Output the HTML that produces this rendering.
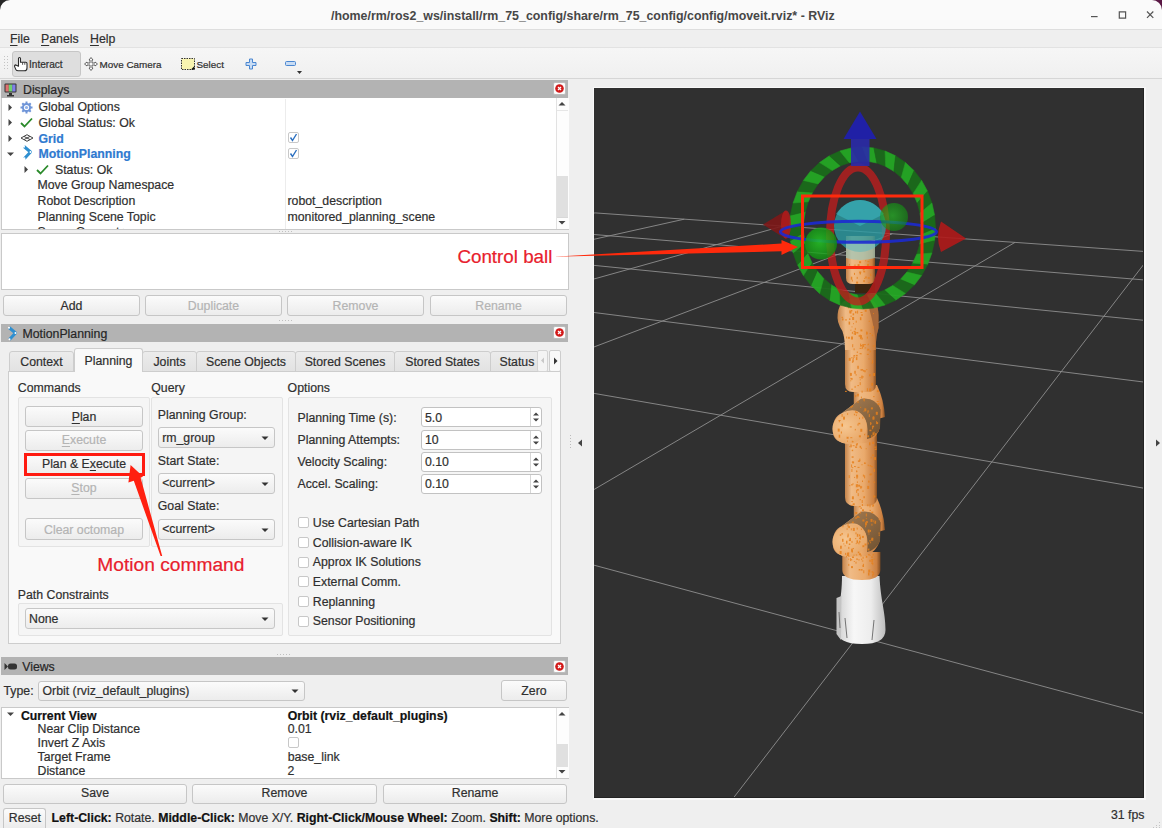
<!DOCTYPE html><html><head><meta charset="utf-8"><style>
html,body{margin:0;padding:0;}body{width:1162px;height:828px;position:relative;overflow:hidden;background:#efefef;font-family:'Liberation Sans',sans-serif;}
.t{position:absolute;white-space:pre;-webkit-text-stroke:0.2px currentColor;} .r{position:absolute;} svg.r{overflow:visible;}
</style></head><body>
<div class="r" style="left:0px;top:0px;width:1162px;height:29px;background:#fafafa;"></div>
<div class="r" style="left:0px;top:29px;width:1162px;height:1px;background:#dedede;"></div>
<svg class="r" style="left:0;top:0" width="12" height="12"><path d="M0 0H10A10 10 0 0 0 0 10Z" fill="#262626"/></svg>
<svg class="r" style="left:1150px;top:0" width="12" height="12"><path d="M12 0H2A10 10 0 0 1 12 10Z" fill="#5a1845"/></svg>
<div class="t" style="left:331.0px;top:7.90px;font-size:12.4px;line-height:16px;font-weight:700;color:#474747;-webkit-text-stroke:0;">/home/rm/ros2_ws/install/rm_75_config/share/rm_75_config/config/moveit.rviz* - RViz</div>
<svg class="r" style="left:1088px;top:8px" width="70" height="14"><path d="M3 8.6H9.6" stroke="#555" stroke-width="1.2"/><path d="M31.3 3.8h6.3v6.3h-6.3z" fill="none" stroke="#555" stroke-width="1.2"/><path d="M59 3.5L65.3 9.8M65.3 3.5L59 9.8" stroke="#555" stroke-width="1.2"/></svg>
<div class="r" style="left:0px;top:30px;width:1162px;height:17px;background:#efefef;"></div>
<div class="r" style="left:0px;top:47px;width:1162px;height:1px;background:#e2e2e2;"></div>
<div class="t" style="left:10.0px;top:31.04px;font-size:12.3px;line-height:16px;font-weight:400;color:#2f2f2f;"><u style="text-decoration-thickness:1px;text-underline-offset:1.5px">F</u>ile</div>
<div class="t" style="left:41.0px;top:31.04px;font-size:12.3px;line-height:16px;font-weight:400;color:#2f2f2f;"><u style="text-decoration-thickness:1px;text-underline-offset:1.5px">P</u>anels</div>
<div class="t" style="left:90.0px;top:31.04px;font-size:12.3px;line-height:16px;font-weight:400;color:#2f2f2f;"><u style="text-decoration-thickness:1px;text-underline-offset:1.5px">H</u>elp</div>
<div class="r" style="left:0px;top:48px;width:1162px;height:30px;background:linear-gradient(#f6f6f6,#f0f0f0);"></div>
<div class="r" style="left:0px;top:78px;width:1162px;height:1px;background:#d6d6d6;"></div>
<svg class="r" style="left:4px;top:56px" width="6" height="16"><g fill="#c4c4c4"><rect x="0" y="0" width="1" height="1"/><rect x="3" y="0" width="1" height="1"/><rect x="0" y="3" width="1" height="1"/><rect x="3" y="3" width="1" height="1"/><rect x="0" y="6" width="1" height="1"/><rect x="3" y="6" width="1" height="1"/><rect x="0" y="9" width="1" height="1"/><rect x="3" y="9" width="1" height="1"/><rect x="0" y="12" width="1" height="1"/><rect x="3" y="12" width="1" height="1"/></g></svg>
<div class="r" style="left:12px;top:51px;width:69px;height:26px;box-sizing:border-box;border:1px solid #c6c6c6;border-radius:3px;background:#dedede;"></div>
<svg class="r" style="left:14px;top:57px" width="14" height="15"><path d="M4.5 8.5V1.6Q4.5 0.5 5.5 0.5Q6.5 0.5 6.5 1.6V5.2H11.8Q13 5.2 13 6.4V11Q13 13.8 10.3 13.8H4.2Q2.6 13.8 1.8 12.4L0.6 9.6Q0.3 8 1.8 7.9L4.5 9.2Z" fill="#fff" stroke="#2a2a2a" stroke-width="1.1" stroke-linejoin="round"/><path d="M8.6 5.5V7.8M10.8 5.5V7.8" stroke="#2a2a2a" stroke-width="0.8"/></svg>
<div class="t" style="left:29.0px;top:56.80px;font-size:10.1px;line-height:16px;font-weight:400;color:#2f2f2f;">Interact</div>
<svg class="r" style="left:84px;top:57px" width="14" height="14"><path d="M7 0.5L9 3H8v3h3V5l2.5 2L11 9V8H8v3h1l-2 2.5L5 11h1V8H3v1L0.5 7L3 5v1h3V3H5z" fill="#fafafa" stroke="#555" stroke-width="0.9"/></svg>
<div class="t" style="left:99.5px;top:56.87px;font-size:9.9px;line-height:16px;font-weight:400;color:#2f2f2f;">Move Camera</div>
<svg class="r" style="left:181px;top:58px" width="14" height="12"><rect x="0.5" y="0.5" width="13" height="11" fill="#f8f4b0" stroke="#333" stroke-width="1" stroke-dasharray="1.5 1"/><path d="M10 11.5L13.5 8V11.5Z" fill="#111"/></svg>
<div class="t" style="left:196.5px;top:56.87px;font-size:9.9px;line-height:16px;font-weight:400;color:#2f2f2f;">Select</div>
<svg class="r" style="left:245px;top:58px" width="12" height="12"><path d="M4.5 1h3v3.5H11v3H7.5V11h-3V7.5H1v-3h3.5z" fill="#c8dcf4" stroke="#4a86d0" stroke-width="1"/></svg>
<svg class="r" style="left:285px;top:61px" width="12" height="6"><rect x="0.5" y="0.5" width="10" height="4" rx="1" fill="#c8dcf4" stroke="#4a86d0" stroke-width="1"/></svg>
<svg class="r" style="left:297px;top:71px" width="5" height="3"><path d="M0 0H5L2.5 3Z" fill="#333"/></svg>
<div class="r" style="left:593px;top:87px;width:553px;height:713px;background:#f8f8f8;"></div>
<svg class="r" style="left:594px;top:88px;overflow:hidden" width="550" height="710" viewBox="594 88 550 710">
<defs><linearGradient id="og" x1="0" x2="1" y1="0" y2="0"><stop offset="0" stop-color="#d8955a"/><stop offset="0.3" stop-color="#f5c794"/><stop offset="0.65" stop-color="#eab07a"/><stop offset="1" stop-color="#a86a34"/></linearGradient><linearGradient id="wg" x1="0" x2="1" y1="0" y2="0"><stop offset="0" stop-color="#cfcfcf"/><stop offset="0.35" stop-color="#f7f7f7"/><stop offset="0.7" stop-color="#ededed"/><stop offset="1" stop-color="#bdbdbd"/></linearGradient><radialGradient id="cy" cx="0.45" cy="0.4" r="0.6"><stop offset="0" stop-color="#66c8d4"/><stop offset="1" stop-color="#2e98a8"/></radialGradient><radialGradient id="gs" cx="0.45" cy="0.45" r="0.6"><stop offset="0" stop-color="#22d022"/><stop offset="1" stop-color="#108a10"/></radialGradient><pattern id="sp" width="9" height="11" patternUnits="userSpaceOnUse"><rect x="1" y="2" width="2" height="2" fill="#e07a1c"/><rect x="6" y="7" width="1.5" height="2" fill="#e07a1c"/><rect x="4" y="0" width="1" height="1" fill="#e8801e"/></pattern></defs>
<rect x="594" y="88" width="550" height="710" fill="#303030"/>
<g stroke="#8e8e8e" stroke-width="1" stroke-opacity="0.9">
<line x1="616.5" y1="950.0" x2="1153.2" y2="252.1"/>
<line x1="1299.9" y1="755.6" x2="480.7" y2="534.6"/>
<line x1="480.4" y1="556.2" x2="1015.0" y2="242.4"/>
<line x1="1299.9" y1="515.1" x2="480.4" y2="373.8"/>
<line x1="480.3" y1="390.1" x2="892.3" y2="233.8"/>
<line x1="1299.9" y1="401.8" x2="480.3" y2="298.1"/>
<line x1="480.2" y1="310.9" x2="782.7" y2="226.1"/>
<line x1="1300.0" y1="335.9" x2="480.2" y2="254.0"/>
<line x1="480.1" y1="264.6" x2="684.2" y2="219.2"/>
<line x1="1300.0" y1="292.8" x2="513.6" y2="227.9"/>
<line x1="480.1" y1="234.1" x2="595.1" y2="212.9"/>
<line x1="1300.0" y1="262.4" x2="595.1" y2="212.9"/>
</g>
<defs><linearGradient id="og2" x1="0" x2="1" y1="0" y2="0"><stop offset="0" stop-color="#c4834a"/><stop offset="0.2" stop-color="#f0bb86"/><stop offset="0.6" stop-color="#eaaa6c"/><stop offset="0.9" stop-color="#cc8040"/><stop offset="1" stop-color="#804c22"/></linearGradient><filter id="bl" x="-5%" y="-5%" width="110%" height="110%"><feGaussianBlur stdDeviation="0.5"/></filter><linearGradient id="side" x1="0" x2="1" y1="0" y2="1"><stop offset="0" stop-color="#efb77c"/><stop offset="0.55" stop-color="#d99452"/><stop offset="1" stop-color="#9c5f2a"/></linearGradient><radialGradient id="face" cx="0.4" cy="0.4" r="0.7"><stop offset="0" stop-color="#f6c690"/><stop offset="1" stop-color="#e6a464"/></radialGradient></defs>
<path d="M842 576 L879.5 576 C880.5 600 885.5 612 885.5 630 Q885.5 644 862 644 Q837 644 837 630 C837 612 842 600 842 576 Z" fill="url(#wg)"/>
<path d="M836.5 598 L841.5 596 L841 640 L836.5 634Z" fill="#c4c4c4"/>
<g stroke="#666" stroke-width="0.9" fill="none"><path d="M845 618 L847 638"/><path d="M874 620 L872 640"/><path d="M839 612 L840 628"/></g>
<path d="M842.3 552 L880.4 552 L880.4 570 Q880 580 862 580 Q842.3 580 842.3 570 Z" fill="url(#og2)"/>
<defs><linearGradient id="bf" x1="0" y1="0" x2="1" y2="1"><stop offset="0" stop-color="#a88056"/><stop offset="1" stop-color="#6e5030"/></linearGradient></defs>
<g><path d="M853.8 498 L877 498 Q884 513 885 530 L870 534 L853.8 522Z" fill="url(#og2)"/><path d="M833 545 Q832 530 842 526 L861 511.7 Q876 510 880.4 522.6 L880 541 Q876 552 866 556 L850 557 Q833 556 833 545 Z" fill="url(#og2)"/><path d="M842 526 L861 511.7 Q876 510 880.4 522.6 L880 541 Q876 550 867 552 Q870 530 857 524 Q850 522 842 526 Z" fill="url(#bf)"/><ellipse cx="849.6" cy="540.7" rx="17.5" ry="15.8" transform="rotate(-25 849.6 540.7)" fill="url(#face)"/></g>
<path d="M845 432 L877 432 L877 497 Q877 505 869 506 L853 506 Q845 505 845 497Z" fill="url(#og2)"/>
<g transform="translate(0 -113)"><path d="M853.8 498 L877 498 Q884 513 885 530 L870 534 L853.8 522Z" fill="url(#og2)"/><path d="M833 545 Q832 530 842 526 L861 511.7 Q876 510 880.4 522.6 L880 541 Q876 552 866 556 L850 557 Q833 556 833 545 Z" fill="url(#og2)"/><path d="M842 526 L861 511.7 Q876 510 880.4 522.6 L880 541 Q876 550 867 552 Q870 530 857 524 Q850 522 842 526 Z" fill="url(#bf)"/><ellipse cx="849.6" cy="540.7" rx="17.5" ry="15.8" transform="rotate(-25 849.6 540.7)" fill="url(#face)"/></g>
<path d="M845 336 L876 336 L876 384 Q876 392 868 392 L853 392 Q845 392 845 384Z" fill="url(#og2)"/>
<path d="M837.5 318 Q837.5 299 853 298.5 L866 298.5 Q878.5 300 878.5 315 L878.5 328 Q876 336 876 342 L876 350 L845 350 Q845 333 840 327 Q837.5 322 837.5 318Z" fill="url(#og2)"/>
<path d="M866 299 Q878.5 300 878.5 315 L878.5 328 Q876 336 876 342 Q873 318 866 299Z" fill="#a8683a"/>
<rect x="855" y="283" width="20" height="10" fill="#3a2410"/>
<path d="M846 236 L875 236 L875 278 Q875 284 868 284 L853 284 Q846 284 846 278Z" fill="url(#og2)"/>
<clipPath id="rc"><path d="M833 545 Q832 530 842 526 L861 511.7 Q876 510 880.4 522.6 L880 541 Q876 552 866 556 L850 557 Q833 556 833 545 Z"/><path d="M833 432 Q832 417 842 413 L861 398.7 Q876 397 880.4 409.6 L880 428 Q876 439 866 443 L850 444 Q833 443 833 432 Z"/><rect x="854" y="385" width="26" height="20"/><rect x="854" y="498" width="28" height="22"/><rect x="842" y="552" width="38" height="28"/><rect x="845" y="440" width="32" height="66"/><rect x="845" y="336" width="31" height="56"/><path d="M837.5 318 Q837.5 299 853 298.5 L866 298.5 Q878.5 300 878.5 315 L878.5 328 Q876 336 876 342 L876 350 L845 350 Q845 333 840 327 Q837.5 322 837.5 318Z"/><rect x="846" y="258" width="29" height="26"/></clipPath>
<g clip-path="url(#rc)"><g fill="#e6801e" opacity="0.85" filter="url(#bl)"><rect x="848.6" y="321.6" width="1.5" height="3"/><rect x="861.0" y="304.4" width="1" height="3"/><rect x="849.3" y="310.4" width="2" height="3"/><rect x="853.7" y="333.0" width="1" height="1.5"/><rect x="868.8" y="320.8" width="1" height="1"/><rect x="846.1" y="336.5" width="1" height="2"/><rect x="866.0" y="331.6" width="1.5" height="3"/><rect x="860.0" y="335.1" width="2" height="3"/><rect x="853.6" y="330.8" width="2" height="1.5"/><rect x="869.1" y="305.5" width="1" height="3"/><rect x="847.9" y="336.8" width="2" height="2"/><rect x="854.5" y="332.0" width="1.5" height="3"/><rect x="859.7" y="334.6" width="1" height="2"/><rect x="872.7" y="326.2" width="1" height="2"/><rect x="871.9" y="334.6" width="1" height="1.5"/><rect x="861.3" y="337.6" width="1.5" height="2"/><rect x="845.0" y="319.4" width="2" height="1"/><rect x="852.0" y="304.4" width="1" height="1"/><rect x="850.4" y="329.7" width="1" height="1"/><rect x="860.4" y="329.4" width="2" height="2"/><rect x="858.6" y="335.2" width="1.5" height="1.5"/><rect x="873.0" y="313.1" width="1" height="1"/><rect x="860.2" y="303.1" width="1" height="3"/><rect x="850.3" y="311.5" width="1" height="2"/><rect x="851.0" y="336.5" width="2" height="3"/><rect x="855.7" y="320.7" width="1" height="2"/><rect x="854.8" y="327.9" width="1" height="2"/><rect x="855.0" y="311.3" width="1.5" height="2"/><rect x="841.4" y="316.9" width="1.5" height="1"/><rect x="853.0" y="323.2" width="1" height="1"/><rect x="861.3" y="314.0" width="1.5" height="2"/><rect x="860.5" y="312.0" width="2" height="1"/><rect x="859.9" y="336.4" width="1" height="2"/><rect x="849.0" y="318.4" width="1.5" height="1.5"/><rect x="852.6" y="313.3" width="1.5" height="2"/><rect x="850.6" y="315.6" width="1" height="1.5"/><rect x="850.9" y="310.0" width="1.5" height="1.5"/><rect x="851.5" y="326.4" width="1" height="1"/><rect x="860.2" y="336.2" width="1" height="3"/><rect x="866.9" y="336.6" width="1" height="2"/><rect x="864.7" y="309.8" width="2" height="2"/><rect x="848.2" y="306.4" width="1" height="2"/><rect x="866.8" y="332.2" width="1" height="2"/><rect x="851.9" y="331.8" width="1" height="2"/><rect x="859.9" y="317.2" width="1.5" height="3"/><rect x="852.1" y="317.0" width="2" height="3"/><rect x="842.1" y="316.9" width="1" height="1"/><rect x="856.3" y="332.0" width="2" height="1.5"/><rect x="842.0" y="318.4" width="1.5" height="2"/><rect x="869.5" y="333.0" width="1.5" height="1"/><rect x="866.9" y="303.6" width="1" height="3"/><rect x="859.5" y="302.5" width="1" height="1.5"/><rect x="857.1" y="310.6" width="1" height="3"/><rect x="842.7" y="334.9" width="1" height="2"/><rect x="851.1" y="388.7" width="2" height="1"/><rect x="856.8" y="351.5" width="1" height="1.5"/><rect x="854.0" y="355.1" width="1" height="1"/><rect x="860.2" y="369.4" width="2" height="1"/><rect x="866.9" y="353.9" width="2" height="1"/><rect x="859.8" y="379.3" width="1" height="1"/><rect x="867.4" y="344.2" width="1" height="1"/><rect x="860.1" y="343.6" width="1" height="3"/><rect x="855.9" y="357.1" width="1.5" height="3"/><rect x="864.2" y="370.2" width="1.5" height="2"/><rect x="852.8" y="357.8" width="1" height="1.5"/><rect x="861.9" y="376.4" width="2" height="1"/><rect x="862.2" y="344.1" width="2" height="3"/><rect x="863.9" y="344.1" width="2" height="1"/><rect x="857.3" y="365.8" width="1.5" height="3"/><rect x="871.8" y="362.1" width="1" height="1.5"/><rect x="853.5" y="355.0" width="1" height="3"/><rect x="853.6" y="348.3" width="1" height="2"/><rect x="857.4" y="385.1" width="1.5" height="1"/><rect x="859.6" y="347.9" width="2" height="1"/><rect x="866.3" y="369.1" width="1" height="1"/><rect x="859.8" y="353.3" width="2" height="1"/><rect x="861.2" y="369.1" width="2" height="1.5"/><rect x="868.5" y="358.4" width="1" height="1"/><rect x="869.1" y="374.3" width="1.5" height="2"/><rect x="868.0" y="343.7" width="1" height="1"/><rect x="861.9" y="346.8" width="1" height="2"/><rect x="869.7" y="350.7" width="1" height="1.5"/><rect x="873.0" y="373.0" width="2" height="3"/><rect x="854.3" y="370.8" width="1.5" height="3"/><rect x="872.2" y="360.0" width="1" height="3"/><rect x="869.1" y="388.4" width="2" height="3"/><rect x="851.9" y="361.3" width="1" height="1.5"/><rect x="850.4" y="377.9" width="2" height="1.5"/><rect x="851.4" y="378.1" width="1" height="2"/><rect x="871.4" y="382.9" width="1.5" height="3"/><rect x="862.9" y="370.1" width="1.5" height="1.5"/><rect x="855.7" y="354.9" width="2" height="1.5"/><rect x="852.3" y="359.3" width="1.5" height="3"/><rect x="867.4" y="348.9" width="2" height="1.5"/><rect x="859.7" y="382.1" width="1" height="3"/><rect x="872.8" y="345.5" width="2" height="1"/><rect x="859.7" y="353.0" width="1" height="1"/><rect x="872.0" y="383.0" width="1" height="1.5"/><rect x="867.4" y="348.6" width="1" height="2"/><rect x="852.2" y="344.2" width="1" height="3"/><rect x="850.3" y="380.3" width="1" height="1"/><rect x="854.6" y="385.9" width="1" height="2"/><rect x="859.3" y="377.2" width="1.5" height="1"/><rect x="848.7" y="357.9" width="2" height="3"/><rect x="849.9" y="372.9" width="2" height="3"/><rect x="851.1" y="357.3" width="1.5" height="1"/><rect x="864.6" y="347.4" width="1.5" height="1"/><rect x="861.2" y="375.6" width="1.5" height="3"/><rect x="855.4" y="374.4" width="1.5" height="1"/><rect x="866.9" y="388.1" width="1" height="3"/><rect x="860.7" y="344.9" width="1.5" height="1.5"/><rect x="864.1" y="433.8" width="1" height="1.5"/><rect x="852.6" y="445.2" width="2" height="1"/><rect x="841.5" y="423.6" width="1.5" height="3"/><rect x="860.3" y="428.8" width="2" height="3"/><rect x="850.1" y="400.6" width="1" height="1"/><rect x="867.1" y="435.3" width="2" height="2"/><rect x="841.2" y="406.3" width="1" height="1.5"/><rect x="838.8" y="420.3" width="1" height="2"/><rect x="873.8" y="446.7" width="2" height="1"/><rect x="851.8" y="440.8" width="1" height="1.5"/><rect x="848.4" y="396.0" width="1" height="1"/><rect x="844.8" y="401.4" width="2" height="3"/><rect x="871.3" y="434.9" width="1" height="3"/><rect x="870.5" y="422.7" width="1" height="1.5"/><rect x="845.5" y="405.0" width="1.5" height="1"/><rect x="872.4" y="416.7" width="2" height="3"/><rect x="850.3" y="444.4" width="1.5" height="3"/><rect x="878.0" y="431.2" width="1.5" height="3"/><rect x="838.3" y="401.4" width="1" height="1"/><rect x="869.4" y="429.7" width="2" height="1.5"/><rect x="859.0" y="417.6" width="1" height="1.5"/><rect x="838.6" y="420.0" width="2" height="1"/><rect x="860.8" y="447.5" width="1" height="1.5"/><rect x="856.6" y="395.3" width="1" height="1"/><rect x="852.1" y="404.0" width="1" height="3"/><rect x="859.6" y="445.8" width="1.5" height="2"/><rect x="873.6" y="431.7" width="1" height="1"/><rect x="873.0" y="426.1" width="1" height="1"/><rect x="868.1" y="410.6" width="1" height="1"/><rect x="873.2" y="416.2" width="1" height="3"/><rect x="850.3" y="437.2" width="2" height="1"/><rect x="872.5" y="432.4" width="2" height="3"/><rect x="856.9" y="394.1" width="2" height="1.5"/><rect x="864.3" y="408.3" width="2" height="3"/><rect x="868.8" y="414.1" width="1" height="3"/><rect x="874.8" y="433.2" width="1.5" height="2"/><rect x="855.8" y="411.7" width="2" height="1.5"/><rect x="877.7" y="438.3" width="1.5" height="2"/><rect x="843.0" y="417.6" width="1" height="1.5"/><rect x="845.8" y="400.2" width="2" height="1.5"/><rect x="863.7" y="398.4" width="1" height="3"/><rect x="857.6" y="393.6" width="1" height="3"/><rect x="855.8" y="414.5" width="1" height="1.5"/><rect x="853.9" y="413.8" width="1" height="1.5"/><rect x="847.1" y="413.3" width="1" height="1.5"/><rect x="851.0" y="397.0" width="1" height="1"/><rect x="870.9" y="407.4" width="2" height="2"/><rect x="857.5" y="423.7" width="1" height="2"/><rect x="863.4" y="410.7" width="1" height="1"/><rect x="865.7" y="448.2" width="1" height="1"/><rect x="838.3" y="395.4" width="1" height="1"/><rect x="857.2" y="401.3" width="1.5" height="1.5"/><rect x="874.8" y="435.4" width="1.5" height="3"/><rect x="875.5" y="446.4" width="1" height="3"/><rect x="849.8" y="426.4" width="2" height="1"/><rect x="876.8" y="401.0" width="2" height="1"/><rect x="858.3" y="422.8" width="2" height="1.5"/><rect x="872.2" y="441.9" width="2" height="2"/><rect x="875.8" y="411.8" width="2" height="3"/><rect x="846.6" y="436.8" width="2" height="2"/><rect x="848.3" y="400.2" width="2" height="3"/><rect x="838.8" y="400.3" width="1" height="3"/><rect x="840.9" y="431.5" width="1" height="2"/><rect x="847.0" y="440.6" width="1" height="1"/><rect x="855.9" y="443.8" width="1.5" height="2"/><rect x="837.1" y="401.7" width="1" height="2"/><rect x="860.9" y="396.6" width="1" height="1.5"/><rect x="847.1" y="392.9" width="1" height="1.5"/><rect x="861.6" y="390.7" width="1" height="2"/><rect x="877.6" y="403.2" width="2" height="2"/><rect x="870.1" y="422.1" width="1" height="3"/><rect x="844.5" y="394.7" width="1" height="1"/><rect x="873.1" y="396.1" width="1.5" height="1"/><rect x="841.6" y="413.9" width="1" height="3"/><rect x="869.0" y="442.3" width="1.5" height="3"/><rect x="862.3" y="416.7" width="1" height="2"/><rect x="872.1" y="425.7" width="2" height="1.5"/><rect x="841.9" y="390.5" width="1.5" height="1"/><rect x="851.3" y="401.5" width="1" height="2"/><rect x="854.8" y="428.9" width="1" height="1.5"/><rect x="851.7" y="449.7" width="1.5" height="1.5"/><rect x="855.1" y="395.1" width="1" height="2"/><rect x="843.9" y="445.9" width="1" height="3"/><rect x="876.1" y="422.1" width="2" height="2"/><rect x="876.8" y="444.2" width="2" height="3"/><rect x="874.5" y="449.0" width="2" height="1"/><rect x="849.3" y="446.1" width="1" height="1"/><rect x="838.2" y="399.0" width="1" height="3"/><rect x="838.7" y="434.7" width="1.5" height="3"/><rect x="855.2" y="410.7" width="1" height="2"/><rect x="843.0" y="416.6" width="2" height="3"/><rect x="840.3" y="399.2" width="1.5" height="3"/><rect x="878.1" y="442.6" width="1.5" height="1.5"/><rect x="855.1" y="446.4" width="2" height="1.5"/><rect x="852.1" y="441.2" width="1.5" height="1"/><rect x="856.5" y="443.2" width="1.5" height="1.5"/><rect x="876.1" y="421.2" width="1" height="1.5"/><rect x="863.4" y="398.9" width="1" height="1.5"/><rect x="876.9" y="390.1" width="2" height="2"/><rect x="878.1" y="437.1" width="1" height="3"/><rect x="844.8" y="390.8" width="2" height="2"/><rect x="872.1" y="426.2" width="1" height="3"/><rect x="850.1" y="404.8" width="2" height="3"/><rect x="867.4" y="410.4" width="1" height="3"/><rect x="838.6" y="449.8" width="1" height="1.5"/><rect x="877.0" y="434.6" width="2" height="2"/><rect x="860.2" y="406.8" width="1" height="1"/><rect x="837.7" y="428.6" width="2" height="3"/><rect x="858.9" y="435.3" width="2" height="2"/><rect x="861.5" y="464.2" width="1" height="1"/><rect x="865.8" y="513.5" width="1" height="3"/><rect x="868.1" y="480.6" width="1.5" height="2"/><rect x="859.8" y="511.6" width="1" height="2"/><rect x="851.6" y="456.3" width="2" height="1.5"/><rect x="869.5" y="509.9" width="1.5" height="1"/><rect x="856.2" y="489.9" width="1" height="3"/><rect x="851.3" y="501.1" width="1.5" height="1"/><rect x="859.3" y="458.6" width="1" height="3"/><rect x="871.3" y="511.6" width="2" height="1.5"/><rect x="856.1" y="474.7" width="2" height="3"/><rect x="856.2" y="470.3" width="1" height="2"/><rect x="856.3" y="477.6" width="1.5" height="1"/><rect x="851.4" y="469.0" width="1" height="3"/><rect x="854.0" y="466.0" width="1" height="1"/><rect x="867.3" y="504.3" width="1" height="2"/><rect x="873.3" y="495.5" width="2" height="2"/><rect x="873.6" y="481.7" width="1.5" height="1"/><rect x="852.5" y="483.2" width="1" height="1.5"/><rect x="851.9" y="496.3" width="2" height="3"/><rect x="864.8" y="462.5" width="1" height="1.5"/><rect x="867.7" y="464.6" width="1" height="1.5"/><rect x="870.7" y="456.9" width="1" height="1.5"/><rect x="857.9" y="460.4" width="2" height="1.5"/><rect x="873.7" y="470.8" width="1" height="1"/><rect x="851.8" y="461.6" width="1.5" height="1"/><rect x="872.3" y="454.4" width="1.5" height="1.5"/><rect x="873.5" y="468.8" width="1.5" height="3"/><rect x="850.7" y="504.8" width="2" height="1"/><rect x="867.2" y="485.9" width="2" height="3"/><rect x="860.1" y="486.3" width="2" height="1.5"/><rect x="861.9" y="504.0" width="1" height="2"/><rect x="872.3" y="504.9" width="1" height="2"/><rect x="873.0" y="504.4" width="1" height="2"/><rect x="854.9" y="466.1" width="1" height="1"/><rect x="858.6" y="506.4" width="1" height="1"/><rect x="852.1" y="461.4" width="2" height="2"/><rect x="861.7" y="500.0" width="1" height="3"/><rect x="862.0" y="480.5" width="1" height="1.5"/><rect x="856.4" y="484.4" width="1.5" height="2"/><rect x="863.4" y="496.2" width="1.5" height="2"/><rect x="855.5" y="512.6" width="1.5" height="1.5"/><rect x="851.2" y="484.0" width="1.5" height="1.5"/><rect x="855.3" y="512.0" width="2" height="1.5"/><rect x="860.4" y="485.9" width="1" height="3"/><rect x="873.9" y="457.1" width="2" height="3"/><rect x="862.3" y="490.6" width="1.5" height="1"/><rect x="854.1" y="476.9" width="1" height="1"/><rect x="857.5" y="466.9" width="2" height="1"/><rect x="859.2" y="506.0" width="1.5" height="1"/><rect x="855.8" y="484.3" width="2" height="3"/><rect x="857.7" y="493.1" width="1" height="3"/><rect x="851.8" y="467.2" width="1.5" height="1"/><rect x="864.0" y="462.4" width="1" height="1.5"/><rect x="856.3" y="471.0" width="1" height="1"/><rect x="862.0" y="509.3" width="2" height="2"/><rect x="869.5" y="504.3" width="1" height="3"/><rect x="856.8" y="489.1" width="2" height="1.5"/><rect x="860.4" y="507.4" width="1.5" height="1.5"/><rect x="851.1" y="464.4" width="1" height="3"/><rect x="848.7" y="475.1" width="1" height="3"/><rect x="869.6" y="465.0" width="1.5" height="1.5"/><rect x="858.1" y="484.7" width="2" height="2"/><rect x="859.3" y="459.8" width="1" height="1"/><rect x="859.5" y="499.2" width="1.5" height="1"/><rect x="870.1" y="473.5" width="2" height="1"/><rect x="869.5" y="473.9" width="2" height="1.5"/><rect x="871.0" y="466.1" width="2" height="1"/><rect x="849.3" y="485.1" width="1" height="1"/><rect x="852.7" y="503.3" width="2" height="2"/><rect x="856.9" y="481.4" width="1" height="1.5"/><rect x="862.9" y="474.6" width="1" height="2"/><rect x="864.1" y="475.3" width="1" height="3"/><rect x="839.8" y="534.3" width="1.5" height="1.5"/><rect x="859.7" y="554.1" width="1" height="1"/><rect x="880.1" y="519.6" width="2" height="1.5"/><rect x="851.5" y="549.5" width="1.5" height="3"/><rect x="848.4" y="555.4" width="1" height="1.5"/><rect x="855.5" y="532.3" width="1" height="2"/><rect x="848.5" y="526.4" width="1.5" height="1"/><rect x="846.6" y="528.3" width="1" height="1.5"/><rect x="848.3" y="546.9" width="1" height="2"/><rect x="865.0" y="522.3" width="2" height="3"/><rect x="864.5" y="543.5" width="2" height="2"/><rect x="839.6" y="551.0" width="2" height="3"/><rect x="837.8" y="522.3" width="2" height="3"/><rect x="847.2" y="552.4" width="2" height="2"/><rect x="855.7" y="543.1" width="1" height="1"/><rect x="870.0" y="529.9" width="1" height="2"/><rect x="842.0" y="538.8" width="1.5" height="3"/><rect x="865.9" y="521.1" width="2" height="2"/><rect x="859.7" y="541.4" width="1" height="1"/><rect x="869.3" y="559.8" width="1.5" height="2"/><rect x="861.9" y="560.5" width="1.5" height="1"/><rect x="856.5" y="540.3" width="1.5" height="3"/><rect x="859.0" y="540.7" width="1" height="2"/><rect x="869.1" y="540.4" width="2" height="1"/><rect x="851.9" y="521.6" width="2" height="1.5"/><rect x="861.9" y="535.9" width="2" height="2"/><rect x="841.9" y="516.6" width="2" height="1.5"/><rect x="844.6" y="545.3" width="1" height="1"/><rect x="862.4" y="519.5" width="2" height="2"/><rect x="855.3" y="517.1" width="1.5" height="2"/><rect x="847.6" y="526.3" width="1" height="1"/><rect x="858.9" y="534.4" width="1.5" height="2"/><rect x="881.3" y="522.7" width="1" height="1.5"/><rect x="848.4" y="526.1" width="1.5" height="2"/><rect x="878.5" y="518.6" width="1" height="1"/><rect x="847.4" y="535.5" width="1" height="2"/><rect x="875.1" y="520.7" width="1" height="3"/><rect x="849.4" y="537.9" width="1.5" height="3"/><rect x="871.3" y="537.7" width="2" height="3"/><rect x="848.8" y="539.6" width="2" height="1.5"/><rect x="839.1" y="522.0" width="1" height="1.5"/><rect x="873.4" y="520.2" width="1" height="2"/><rect x="848.8" y="543.5" width="1.5" height="1.5"/><rect x="842.4" y="524.2" width="1" height="3"/><rect x="856.7" y="527.6" width="1" height="2"/><rect x="867.8" y="542.4" width="1" height="2"/><rect x="843.3" y="543.4" width="1" height="1"/><rect x="837.3" y="517.9" width="2" height="3"/><rect x="862.4" y="545.2" width="2" height="2"/><rect x="845.1" y="552.9" width="1" height="2"/><rect x="868.4" y="533.5" width="1" height="1"/><rect x="852.5" y="548.1" width="1.5" height="1"/><rect x="839.0" y="523.9" width="1" height="3"/><rect x="880.0" y="547.9" width="1" height="3"/><rect x="857.8" y="551.6" width="1.5" height="1.5"/><rect x="847.6" y="533.5" width="1" height="3"/><rect x="851.5" y="540.9" width="1" height="2"/><rect x="841.4" y="533.1" width="1.5" height="1.5"/><rect x="846.0" y="540.7" width="1.5" height="3"/><rect x="867.5" y="548.6" width="2" height="2"/><rect x="873.8" y="522.4" width="2" height="1"/><rect x="850.1" y="558.1" width="1" height="3"/><rect x="860.9" y="528.5" width="1" height="1.5"/><rect x="853.8" y="561.0" width="1" height="1"/><rect x="860.0" y="536.5" width="1" height="3"/><rect x="837.9" y="515.1" width="1" height="1"/><rect x="869.6" y="554.8" width="1" height="1"/><rect x="852.8" y="527.9" width="2" height="3"/><rect x="850.8" y="528.3" width="1" height="2"/><rect x="865.8" y="518.2" width="1" height="1"/><rect x="881.3" y="523.0" width="1" height="1.5"/><rect x="871.3" y="539.0" width="1" height="1.5"/><rect x="840.8" y="545.7" width="1" height="3"/><rect x="840.1" y="545.8" width="1" height="3"/><rect x="867.7" y="529.6" width="2" height="3"/><rect x="858.4" y="542.3" width="1" height="2"/><rect x="851.1" y="548.7" width="1.5" height="3"/><rect x="871.4" y="523.7" width="1" height="2"/><rect x="871.2" y="559.0" width="2" height="1.5"/><rect x="870.1" y="542.2" width="1" height="1"/><rect x="865.1" y="525.3" width="1" height="2"/><rect x="841.5" y="522.4" width="2" height="2"/><rect x="856.8" y="533.8" width="1.5" height="3"/><rect x="856.8" y="515.9" width="2" height="2"/><rect x="878.6" y="532.4" width="1" height="1.5"/><rect x="847.5" y="523.2" width="1" height="3"/><rect x="870.5" y="518.9" width="2" height="3"/><rect x="859.0" y="537.6" width="2" height="1.5"/><rect x="858.8" y="516.7" width="1" height="1"/><rect x="845.9" y="555.9" width="1" height="1.5"/><rect x="855.2" y="538.1" width="1" height="1"/><rect x="841.8" y="524.1" width="1.5" height="1.5"/><rect x="878.7" y="534.4" width="1" height="1.5"/><rect x="846.9" y="553.0" width="2" height="3"/><rect x="855.5" y="561.7" width="1" height="2"/><rect x="862.5" y="565.0" width="1.5" height="2"/><rect x="862.6" y="556.7" width="1" height="2"/><rect x="852.0" y="556.5" width="2" height="1.5"/><rect x="871.6" y="571.2" width="1.5" height="1.5"/><rect x="868.2" y="554.0" width="1.5" height="1.5"/><rect x="871.0" y="556.6" width="2" height="1"/><rect x="861.2" y="558.6" width="1" height="1.5"/><rect x="868.6" y="570.0" width="1" height="2"/><rect x="856.3" y="558.4" width="1.5" height="1.5"/><rect x="873.2" y="572.1" width="1" height="3"/><rect x="858.8" y="553.2" width="2" height="2"/><rect x="863.3" y="570.2" width="1" height="3"/><rect x="873.7" y="558.8" width="1" height="1"/><rect x="858.7" y="569.0" width="1.5" height="1.5"/><rect x="853.5" y="554.7" width="1" height="1"/><rect x="851.2" y="559.0" width="1" height="1.5"/><rect x="855.8" y="554.5" width="1.5" height="1"/><rect x="858.2" y="559.4" width="1.5" height="1"/><rect x="860.6" y="569.1" width="2" height="1.5"/><rect x="860.5" y="554.6" width="1" height="2"/><rect x="871.4" y="562.5" width="2" height="1.5"/><rect x="871.4" y="560.3" width="1.5" height="2"/><rect x="868.0" y="572.5" width="1.5" height="3"/><rect x="862.9" y="563.8" width="1" height="3"/><rect x="848.2" y="558.7" width="1" height="1"/><rect x="865.8" y="555.8" width="1.5" height="2"/><rect x="848.3" y="563.9" width="1" height="2"/><rect x="872.3" y="573.6" width="1" height="3"/><rect x="851.0" y="566.1" width="2" height="2"/><rect x="868.3" y="569.5" width="2" height="3"/><rect x="872.3" y="564.1" width="1" height="1"/><rect x="872.7" y="554.0" width="1" height="1.5"/><rect x="868.1" y="266.2" width="1.5" height="1"/><rect x="867.4" y="261.1" width="2" height="1"/><rect x="851.8" y="279.6" width="1" height="2"/><rect x="865.2" y="276.4" width="1.5" height="2"/><rect x="865.1" y="260.3" width="1" height="1"/><rect x="854.0" y="272.9" width="1" height="2"/><rect x="859.2" y="271.5" width="2" height="1.5"/><rect x="863.3" y="280.1" width="1.5" height="2"/><rect x="850.8" y="276.7" width="1.5" height="3"/><rect x="867.5" y="265.3" width="1.5" height="2"/><rect x="856.7" y="276.9" width="1" height="2"/><rect x="857.6" y="264.1" width="2" height="2"/><rect x="862.7" y="268.9" width="2" height="1.5"/><rect x="870.2" y="273.8" width="1" height="2"/><rect x="859.1" y="261.2" width="2" height="2"/><rect x="863.2" y="270.9" width="2" height="1.5"/><rect x="868.5" y="282.0" width="1" height="1"/><rect x="867.7" y="277.2" width="2" height="1.5"/><rect x="853.7" y="265.8" width="1" height="2"/><rect x="849.0" y="263.9" width="1" height="1.5"/><rect x="859.5" y="272.4" width="1.5" height="2"/><rect x="864.2" y="277.9" width="1" height="1"/><rect x="856.5" y="266.6" width="1" height="2"/><rect x="867.0" y="263.9" width="2" height="3"/><rect x="856.1" y="281.6" width="2" height="2"/><rect x="854.5" y="264.4" width="1" height="2"/></g></g>
<g opacity="0.95"><path d="M935.5 228.0 L934.6 240.7 L919.7 244.4 L921.3 234.0Z" fill="#24a824" stroke="#24a824" stroke-width="0.6"/><path d="M934.6 240.7 L931.9 253.0 L916.7 254.3 L919.7 244.4Z" fill="#1a6c1a" stroke="#1a6c1a" stroke-width="0.6"/><path d="M931.9 253.0 L927.5 264.8 L912.4 263.7 L916.7 254.3Z" fill="#24a824" stroke="#24a824" stroke-width="0.6"/><path d="M927.5 264.8 L921.6 275.6 L906.9 272.1 L912.4 263.7Z" fill="#1a6c1a" stroke="#1a6c1a" stroke-width="0.6"/><path d="M921.6 275.6 L914.1 285.3 L900.3 279.4 L906.9 272.1Z" fill="#24a824" stroke="#24a824" stroke-width="0.6"/><path d="M914.1 285.3 L905.4 293.5 L892.7 285.5 L900.3 279.4Z" fill="#1a6c1a" stroke="#1a6c1a" stroke-width="0.6"/><path d="M905.4 293.5 L895.6 300.2 L884.5 290.2 L892.7 285.5Z" fill="#24a824" stroke="#24a824" stroke-width="0.6"/><path d="M895.6 300.2 L885.1 305.0 L875.6 293.3 L884.5 290.2Z" fill="#1a6c1a" stroke="#1a6c1a" stroke-width="0.6"/><path d="M885.1 305.0 L873.9 308.0 L866.5 294.8 L875.6 293.3Z" fill="#24a824" stroke="#24a824" stroke-width="0.6"/><path d="M873.9 308.0 L862.5 309.0 L857.2 294.7 L866.5 294.8Z" fill="#1a6c1a" stroke="#1a6c1a" stroke-width="0.6"/><path d="M862.5 309.0 L851.1 308.0 L848.1 293.0 L857.2 294.7Z" fill="#24a824" stroke="#24a824" stroke-width="0.6"/><path d="M851.1 308.0 L839.9 305.0 L839.3 289.6 L848.1 293.0Z" fill="#1a6c1a" stroke="#1a6c1a" stroke-width="0.6"/><path d="M839.9 305.0 L829.4 300.2 L831.1 284.7 L839.3 289.6Z" fill="#24a824" stroke="#24a824" stroke-width="0.6"/><path d="M829.4 300.2 L819.6 293.5 L823.7 278.4 L831.1 284.7Z" fill="#1a6c1a" stroke="#1a6c1a" stroke-width="0.6"/><path d="M819.6 293.5 L810.9 285.3 L817.2 270.9 L823.7 278.4Z" fill="#24a824" stroke="#24a824" stroke-width="0.6"/><path d="M810.9 285.3 L803.4 275.6 L811.8 262.4 L817.2 270.9Z" fill="#1a6c1a" stroke="#1a6c1a" stroke-width="0.6"/><path d="M803.4 275.6 L797.5 264.8 L807.7 252.9 L811.8 262.4Z" fill="#24a824" stroke="#24a824" stroke-width="0.6"/><path d="M797.5 264.8 L793.1 253.0 L805.0 242.9 L807.7 252.9Z" fill="#1a6c1a" stroke="#1a6c1a" stroke-width="0.6"/><path d="M793.1 253.0 L790.4 240.7 L803.6 232.5 L805.0 242.9Z" fill="#24a824" stroke="#24a824" stroke-width="0.6"/><path d="M790.4 240.7 L789.5 228.0 L803.7 222.0 L803.6 232.5Z" fill="#1a6c1a" stroke="#1a6c1a" stroke-width="0.6"/><path d="M789.5 228.0 L790.4 215.3 L805.3 211.6 L803.7 222.0Z" fill="#24a824" stroke="#24a824" stroke-width="0.6"/><path d="M790.4 215.3 L793.1 203.0 L808.3 201.7 L805.3 211.6Z" fill="#1a6c1a" stroke="#1a6c1a" stroke-width="0.6"/><path d="M793.1 203.0 L797.5 191.2 L812.6 192.3 L808.3 201.7Z" fill="#24a824" stroke="#24a824" stroke-width="0.6"/><path d="M797.5 191.2 L803.4 180.4 L818.1 183.9 L812.6 192.3Z" fill="#1a6c1a" stroke="#1a6c1a" stroke-width="0.6"/><path d="M803.4 180.4 L810.9 170.7 L824.7 176.6 L818.1 183.9Z" fill="#24a824" stroke="#24a824" stroke-width="0.6"/><path d="M810.9 170.7 L819.6 162.5 L832.3 170.5 L824.7 176.6Z" fill="#1a6c1a" stroke="#1a6c1a" stroke-width="0.6"/><path d="M819.6 162.5 L829.4 155.8 L840.5 165.8 L832.3 170.5Z" fill="#24a824" stroke="#24a824" stroke-width="0.6"/><path d="M829.4 155.8 L839.9 151.0 L849.4 162.7 L840.5 165.8Z" fill="#1a6c1a" stroke="#1a6c1a" stroke-width="0.6"/><path d="M839.9 151.0 L851.1 148.0 L858.5 161.2 L849.4 162.7Z" fill="#24a824" stroke="#24a824" stroke-width="0.6"/><path d="M851.1 148.0 L862.5 147.0 L867.8 161.3 L858.5 161.2Z" fill="#1a6c1a" stroke="#1a6c1a" stroke-width="0.6"/><path d="M862.5 147.0 L873.9 148.0 L876.9 163.0 L867.8 161.3Z" fill="#24a824" stroke="#24a824" stroke-width="0.6"/><path d="M873.9 148.0 L885.1 151.0 L885.7 166.4 L876.9 163.0Z" fill="#1a6c1a" stroke="#1a6c1a" stroke-width="0.6"/><path d="M885.1 151.0 L895.6 155.8 L893.9 171.3 L885.7 166.4Z" fill="#24a824" stroke="#24a824" stroke-width="0.6"/><path d="M895.6 155.8 L905.4 162.5 L901.3 177.6 L893.9 171.3Z" fill="#1a6c1a" stroke="#1a6c1a" stroke-width="0.6"/><path d="M905.4 162.5 L914.1 170.7 L907.8 185.1 L901.3 177.6Z" fill="#24a824" stroke="#24a824" stroke-width="0.6"/><path d="M914.1 170.7 L921.6 180.4 L913.2 193.6 L907.8 185.1Z" fill="#1a6c1a" stroke="#1a6c1a" stroke-width="0.6"/><path d="M921.6 180.4 L927.5 191.2 L917.3 203.1 L913.2 193.6Z" fill="#24a824" stroke="#24a824" stroke-width="0.6"/><path d="M927.5 191.2 L931.9 203.0 L920.0 213.1 L917.3 203.1Z" fill="#1a6c1a" stroke="#1a6c1a" stroke-width="0.6"/><path d="M931.9 203.0 L934.6 215.3 L921.4 223.5 L920.0 213.1Z" fill="#24a824" stroke="#24a824" stroke-width="0.6"/><path d="M934.6 215.3 L935.5 228.0 L921.3 234.0 L921.4 223.5Z" fill="#1a6c1a" stroke="#1a6c1a" stroke-width="0.6"/></g>
<ellipse cx="858" cy="234.5" rx="28" ry="67" fill="none" stroke="#c41c1c" stroke-width="8" opacity="0.75"/>
<path d="M851 139 H869.5 V166 H851Z" fill="#2a2aa8" opacity="0.9"/>
<path d="M860 111.5 L876.5 139 L843.5 139Z" fill="#2020a6"/>
<path d="M763 224.5 L786 210.5 Q792 224.5 786 239 Z" fill="#7e1818" opacity="0.9"/>
<ellipse cx="786" cy="224.5" rx="5" ry="14" fill="#b01c1c" opacity="0.85"/>
<path d="M966 238.5 L941 221.5 Q935 237 941 252 Z" fill="#b01a1a" opacity="0.9"/>
<circle cx="860" cy="226" r="26" fill="#2a9ca4" opacity="0.8"/>
<path d="M836 214 Q846 200 860 200 Q874 200 884 214 L860 226Z" fill="#3cb6be" opacity="0.6"/>
<path d="M846 258 Q860 262 875 258 L875 240 Q860 244 846 240Z" fill="#9cc8bc" opacity="0.7"/>
<ellipse cx="858.5" cy="231.8" rx="78" ry="10.5" fill="none" stroke="#1c2ad0" stroke-width="3" opacity="0.9"/>
<circle cx="894" cy="217" r="14" fill="url(#gs)" opacity="0.6"/>
<circle cx="821" cy="243.5" r="16" fill="url(#gs)" opacity="0.8"/>
<rect x="802.5" y="196" width="119.5" height="71.5" fill="none" stroke="#ff2a0c" stroke-width="3"/>
<path d="M1143.5 88V797.5H594" fill="none" stroke="#232323" stroke-width="1"/>
</svg>
<svg class="r" style="left:576px;top:438px" width="8" height="10"><path d="M6 1.5L2 5L6 8.5Z" fill="#444"/></svg>
<svg class="r" style="left:570px;top:434px" width="3" height="20"><g fill="#bbb"><rect x="0" y="1" width="1" height="1"/><rect x="0" y="4" width="1" height="1"/><rect x="0" y="7" width="1" height="1"/><rect x="0" y="10" width="1" height="1"/><rect x="0" y="13" width="1" height="1"/></g></svg>
<svg class="r" style="left:1154px;top:438px" width="8" height="10"><path d="M2 1.5L6 5L2 8.5Z" fill="#444"/></svg>
<div class="r" style="left:1px;top:80px;width:567px;height:18px;background:#b3b3b3;"></div>
<svg class="r" style="left:4px;top:83px" width="14" height="14"><rect x="0.5" y="0.5" width="12" height="9" rx="1" fill="#333"/><rect x="1.5" y="1.5" width="3.3" height="7" fill="#e07070"/><rect x="4.8" y="1.5" width="3.4" height="7" fill="#70d070"/><rect x="8.2" y="1.5" width="3.3" height="7" fill="#8080e8"/><rect x="5" y="10" width="3" height="2" fill="#333"/><rect x="3" y="12" width="7" height="1.5" fill="#333"/></svg>
<div class="t" style="left:23.0px;top:81.84px;font-size:12.3px;line-height:16px;font-weight:400;color:#262626;">Displays</div>
<div class="r" style="left:553px;top:82px;width:13px;height:13px;box-sizing:border-box;border:1px solid #bdbdbd;border-radius:2px;background:#fbfbfb;"></div>
<svg class="r" style="left:555px;top:83.5px" width="9" height="9"><circle cx="4.5" cy="4.5" r="4.3" fill="#d21a1a"/><path d="M3 3L6 6M6 3L3 6" stroke="#fff" stroke-width="1.2"/></svg>
<div class="r" style="left:1px;top:98px;width:568px;height:132px;box-sizing:border-box;border:1px solid #c9c9c9;border-top:none;background:#fff;"></div>
<div class="r" style="left:285px;top:99px;width:1px;height:130px;background:#ececec;"></div>
<div class="r" style="left:556px;top:98px;width:12px;height:131px;background:#fdfdfd;border-left:1px solid #e2e2e2;"></div>
<div class="r" style="left:557px;top:176px;width:11px;height:42px;background:#e0e0e0;"></div>
<div class="r" style="left:557px;top:110px;width:11px;height:1px;background:#e6e6e6;"></div>
<div class="r" style="left:557px;top:217px;width:11px;height:1px;background:#d8d8d8;"></div>
<svg class="r" style="left:558px;top:101px" width="8" height="6"><path d="M0.5 4.5L4 1L7.5 4.5Z" fill="#444"/></svg>
<svg class="r" style="left:558px;top:220px" width="8" height="6"><path d="M0.5 1L4 4.5L7.5 1Z" fill="#444"/></svg>
<svg class="r" style="left:8px;top:103.6px" width="5" height="7"><path d="M0.5 0L4 3.5L0.5 7Z" fill="#444"/></svg>
<svg class="r" style="left:8px;top:119.2px" width="5" height="7"><path d="M0.5 0L4 3.5L0.5 7Z" fill="#444"/></svg>
<svg class="r" style="left:8px;top:134.8px" width="5" height="7"><path d="M0.5 0L4 3.5L0.5 7Z" fill="#444"/></svg>
<svg class="r" style="left:6.5px;top:151.9px" width="7" height="5"><path d="M0 0.5H7L3.5 4Z" fill="#444"/></svg>
<svg class="r" style="left:24px;top:166.0px" width="5" height="7"><path d="M0.5 0L4 3.5L0.5 7Z" fill="#444"/></svg>
<svg class="r" style="left:20px;top:100.6px" width="13" height="13"><g fill="#6f95d8"><circle cx="6.5" cy="6.5" r="4.6"/><g stroke="#6f95d8" stroke-width="2"><path d="M6.5 0.5V12.5M0.5 6.5H12.5M2.3 2.3L10.7 10.7M10.7 2.3L2.3 10.7"/></g></g><circle cx="6.5" cy="6.5" r="2.6" fill="#fff"/><circle cx="6.5" cy="6.5" r="1.6" fill="#8fb0e8"/></svg>
<div class="t" style="left:38.5px;top:99.34px;font-size:12.3px;line-height:16px;font-weight:400;color:#2f2f2f;">Global Options</div>
<svg class="r" style="left:20px;top:117.2px" width="13" height="11"><path d="M1 6L4.5 9.5L12 1.5" fill="none" stroke="#2a8a2a" stroke-width="1.8"/></svg>
<div class="t" style="left:38.5px;top:114.94px;font-size:12.3px;line-height:16px;font-weight:400;color:#2f2f2f;">Global Status: Ok</div>
<svg class="r" style="left:20px;top:133.8px" width="14" height="8"><path d="M7 0.7L13 4L7 7.3L1 4Z M4 2.4L10 5.6 M10 2.4L4 5.6" fill="none" stroke="#444" stroke-width="1"/></svg>
<div class="t" style="left:38.5px;top:130.54px;font-size:12.3px;line-height:16px;font-weight:700;color:#2f7ad0;">Grid</div>
<svg class="r" style="left:22px;top:145.4px" width="11" height="15"><path d="M2 1.5L8.5 7L2.5 13.5" fill="none" stroke="#2e8fd0" stroke-width="3" stroke-linejoin="round"/><circle cx="2" cy="1.8" r="1" fill="#fff"/><circle cx="8.5" cy="7" r="1" fill="#fff"/><circle cx="2.5" cy="13.3" r="1" fill="#fff"/></svg>
<div class="t" style="left:38.5px;top:146.14px;font-size:12.3px;line-height:16px;font-weight:700;color:#2f7ad0;">MotionPlanning</div>
<svg class="r" style="left:36px;top:164.0px" width="13" height="11"><path d="M1 6L4.5 9.5L12 1.5" fill="none" stroke="#2a8a2a" stroke-width="1.8"/></svg>
<div class="t" style="left:55.0px;top:161.74px;font-size:12.3px;line-height:16px;font-weight:400;color:#2f2f2f;">Status: Ok</div>
<div class="t" style="left:37.5px;top:177.34px;font-size:12.3px;line-height:16px;font-weight:400;color:#2f2f2f;">Move Group Namespace</div>
<div class="t" style="left:37.5px;top:192.94px;font-size:12.3px;line-height:16px;font-weight:400;color:#2f2f2f;">Robot Description</div>
<div class="t" style="left:37.5px;top:208.54px;font-size:12.3px;line-height:16px;font-weight:400;color:#2f2f2f;">Planning Scene Topic</div>
<div class="r" style="left:287.5px;top:132.3px;width:11.0px;height:11.0px;box-sizing:border-box;border:1px solid #c8c8c8;border-radius:2px;background:#fff;"></div>
<svg class="r" style="left:287.5px;top:132.3px" width="11" height="11"><path d="M2.5 5.5L4.5 8.5L8.5 2" fill="none" stroke="#2a6fc0" stroke-width="1.4"/></svg>
<div class="r" style="left:287.5px;top:147.9px;width:11.0px;height:11.0px;box-sizing:border-box;border:1px solid #c8c8c8;border-radius:2px;background:#fff;"></div>
<svg class="r" style="left:287.5px;top:147.9px" width="11" height="11"><path d="M2.5 5.5L4.5 8.5L8.5 2" fill="none" stroke="#2a6fc0" stroke-width="1.4"/></svg>
<div class="t" style="left:287.5px;top:192.94px;font-size:12.3px;line-height:16px;font-weight:400;color:#2f2f2f;">robot_description</div>
<div class="t" style="left:287.5px;top:208.54px;font-size:12.3px;line-height:16px;font-weight:400;color:#2f2f2f;">monitored_planning_scene</div>
<div class="r" style="left:2px;top:224px;width:280px;height:5px;overflow:hidden"><div class="t" style="left:35.5px;top:0.2px;font-size:12.3px;line-height:16px;color:#2f2f2f">Scene Geometry</div></div>
<div class="r" style="left:1px;top:233px;width:568px;height:57px;box-sizing:border-box;border:1px solid #c9c9c9;background:#fff;"></div>
<div class="r" style="left:3px;top:295px;width:137px;height:21px;box-sizing:border-box;border:1px solid #c6c6c6;border-radius:3px;background:linear-gradient(#fbfbfb,#ececec);"></div>
<div class="t" style="left:3.0px;width:137.0px;text-align:center;top:297.54px;font-size:12.3px;line-height:16px;font-weight:400;color:#2f2f2f;">Add</div>
<div class="r" style="left:145px;top:295px;width:137px;height:21px;box-sizing:border-box;border:1px solid #c6c6c6;border-radius:3px;background:linear-gradient(#fbfbfb,#ececec);"></div>
<div class="t" style="left:145.0px;width:137.0px;text-align:center;top:297.54px;font-size:12.3px;line-height:16px;font-weight:400;color:#b4b4b4;">Duplicate</div>
<div class="r" style="left:287px;top:295px;width:137px;height:21px;box-sizing:border-box;border:1px solid #c6c6c6;border-radius:3px;background:linear-gradient(#fbfbfb,#ececec);"></div>
<div class="t" style="left:287.0px;width:137.0px;text-align:center;top:297.54px;font-size:12.3px;line-height:16px;font-weight:400;color:#b4b4b4;">Remove</div>
<div class="r" style="left:430px;top:295px;width:137px;height:21px;box-sizing:border-box;border:1px solid #c6c6c6;border-radius:3px;background:linear-gradient(#fbfbfb,#ececec);"></div>
<div class="t" style="left:430.0px;width:137.0px;text-align:center;top:297.54px;font-size:12.3px;line-height:16px;font-weight:400;color:#b4b4b4;">Rename</div>
<svg class="r" style="left:279px;top:320px" width="14" height="2"><g fill="#c0c0c0"><rect x="0" y="0" width="1" height="1"/><rect x="3" y="0" width="1" height="1"/><rect x="6" y="0" width="1" height="1"/><rect x="9" y="0" width="1" height="1"/><rect x="12" y="0" width="1" height="1"/></g></svg>
<svg class="r" style="left:279px;top:230.5px" width="14" height="2"><g fill="#c0c0c0"><rect x="0" y="0" width="1" height="1"/><rect x="3" y="0" width="1" height="1"/><rect x="6" y="0" width="1" height="1"/><rect x="9" y="0" width="1" height="1"/><rect x="12" y="0" width="1" height="1"/></g></svg>
<div class="r" style="left:1px;top:324px;width:567px;height:18px;background:#b3b3b3;"></div>
<svg class="r" style="left:6.5px;top:326px" width="11" height="15"><path d="M2 1.5L8.5 7L2.5 13.5" fill="none" stroke="#2e8fd0" stroke-width="3" stroke-linejoin="round"/><circle cx="2" cy="1.8" r="1" fill="#fff"/><circle cx="8.5" cy="7" r="1" fill="#fff"/><circle cx="2.5" cy="13.3" r="1" fill="#fff"/></svg>
<div class="t" style="left:22.5px;top:325.84px;font-size:12.3px;line-height:16px;font-weight:400;color:#262626;">MotionPlanning</div>
<div class="r" style="left:553px;top:326px;width:13px;height:13px;box-sizing:border-box;border:1px solid #bdbdbd;border-radius:2px;background:#fbfbfb;"></div>
<svg class="r" style="left:555px;top:327.5px" width="9" height="9"><circle cx="4.5" cy="4.5" r="4.3" fill="#d21a1a"/><path d="M3 3L6 6M6 3L3 6" stroke="#fff" stroke-width="1.2"/></svg>
<div class="r" style="left:8px;top:371px;width:553px;height:273px;box-sizing:border-box;border:1px solid #cdcdcd;background:#f9f9f9;"></div>
<div class="r" style="left:9px;top:351px;width:65px;height:21px;box-sizing:border-box;border:1px solid #cdcdcd;border-radius:3px 3px 0 0;background:linear-gradient(#ececec,#e2e2e2);"></div>
<div class="t" style="left:9.0px;width:65.0px;text-align:center;top:354.34px;font-size:12.3px;line-height:16px;font-weight:400;color:#2f2f2f;">Context</div>
<div class="r" style="left:142px;top:351px;width:55px;height:21px;box-sizing:border-box;border:1px solid #cdcdcd;border-radius:3px 3px 0 0;background:linear-gradient(#ececec,#e2e2e2);"></div>
<div class="t" style="left:142.0px;width:55.0px;text-align:center;top:354.34px;font-size:12.3px;line-height:16px;font-weight:400;color:#2f2f2f;">Joints</div>
<div class="r" style="left:196px;top:351px;width:100px;height:21px;box-sizing:border-box;border:1px solid #cdcdcd;border-radius:3px 3px 0 0;background:linear-gradient(#ececec,#e2e2e2);"></div>
<div class="t" style="left:196.0px;width:100.0px;text-align:center;top:354.34px;font-size:12.3px;line-height:16px;font-weight:400;color:#2f2f2f;">Scene Objects</div>
<div class="r" style="left:295px;top:351px;width:100px;height:21px;box-sizing:border-box;border:1px solid #cdcdcd;border-radius:3px 3px 0 0;background:linear-gradient(#ececec,#e2e2e2);"></div>
<div class="t" style="left:295.0px;width:100.0px;text-align:center;top:354.34px;font-size:12.3px;line-height:16px;font-weight:400;color:#2f2f2f;">Stored Scenes</div>
<div class="r" style="left:394px;top:351px;width:97px;height:21px;box-sizing:border-box;border:1px solid #cdcdcd;border-radius:3px 3px 0 0;background:linear-gradient(#ececec,#e2e2e2);"></div>
<div class="t" style="left:394.0px;width:97.0px;text-align:center;top:354.34px;font-size:12.3px;line-height:16px;font-weight:400;color:#2f2f2f;">Stored States</div>
<div class="r" style="left:490px;top:351px;width:47px;height:21px;overflow:hidden"><div class="r" style="left:0;top:0;width:70px;height:21px;box-sizing:border-box;border:1px solid #cdcdcd;border-radius:3px 3px 0 0;background:linear-gradient(#ececec,#e2e2e2);"></div>
<div class="t" style="left:9.5px;top:3.34px;font-size:12.3px;line-height:16px;color:#2f2f2f">Status</div></div>
<div class="r" style="left:537px;top:350px;width:11px;height:22px;box-sizing:border-box;border:1px solid #d4d4d4;border-radius:2px;background:#f4f4f4;"></div>
<div class="r" style="left:549px;top:350px;width:12px;height:22px;box-sizing:border-box;border:1px solid #cdcdcd;border-radius:2px;background:#f8f8f8;"></div>
<svg class="r" style="left:540px;top:357px" width="5" height="7"><path d="M4 0.5L1 3.5L4 6.5Z" fill="#c8c8c8"/></svg>
<svg class="r" style="left:553px;top:357px" width="5" height="8"><path d="M1 0.5L4.5 4L1 7.5Z" fill="#333"/></svg>
<div class="r" style="left:74px;top:348px;width:69px;height:24px;box-sizing:border-box;border:1px solid #cdcdcd;border-bottom:none;border-radius:3px 3px 0 0;background:#f9f9f9;"></div>
<div class="t" style="left:74.0px;width:69.0px;text-align:center;top:353.34px;font-size:12.3px;line-height:16px;font-weight:400;color:#2f2f2f;">Planning</div>
<div class="t" style="left:17.8px;top:380.34px;font-size:12.3px;line-height:16px;font-weight:400;color:#2f2f2f;">Commands</div>
<div class="t" style="left:151.3px;top:380.34px;font-size:12.3px;line-height:16px;font-weight:400;color:#2f2f2f;">Query</div>
<div class="t" style="left:287.6px;top:380.34px;font-size:12.3px;line-height:16px;font-weight:400;color:#2f2f2f;">Options</div>
<div class="r" style="left:18px;top:397px;width:132px;height:150px;box-sizing:border-box;border:1px solid #e3e3e3;border-radius:2px;background:#f5f5f5;"></div>
<div class="r" style="left:151px;top:397px;width:132px;height:150px;box-sizing:border-box;border:1px solid #e3e3e3;border-radius:2px;background:#f5f5f5;"></div>
<div class="r" style="left:288px;top:397px;width:264px;height:239px;box-sizing:border-box;border:1px solid #e3e3e3;border-radius:2px;background:#f5f5f5;"></div>
<div class="r" style="left:18px;top:603px;width:265px;height:33px;box-sizing:border-box;border:1px solid #e3e3e3;border-radius:2px;background:#f5f5f5;"></div>
<div class="r" style="left:25px;top:406px;width:118px;height:21px;box-sizing:border-box;border:1px solid #c6c6c6;border-radius:3px;background:linear-gradient(#fbfbfb,#ececec);"></div>
<div class="t" style="left:25.0px;width:118.0px;text-align:center;top:408.54px;font-size:12.3px;line-height:16px;font-weight:400;color:#2f2f2f;"><u style="text-decoration-thickness:1px;text-underline-offset:1.5px">P</u>lan</div>
<div class="r" style="left:25px;top:430px;width:118px;height:21px;box-sizing:border-box;border:1px solid #c6c6c6;border-radius:3px;background:linear-gradient(#fbfbfb,#ececec);"></div>
<div class="t" style="left:25.0px;width:118.0px;text-align:center;top:432.24px;font-size:12.3px;line-height:16px;font-weight:400;color:#b4b4b4;"><u style="text-decoration-thickness:1px;text-underline-offset:1.5px">E</u>xecute</div>
<div class="r" style="left:25px;top:454px;width:118px;height:21px;box-sizing:border-box;border:1px solid #c6c6c6;border-radius:3px;background:linear-gradient(#fbfbfb,#ececec);"></div>
<div class="t" style="left:25.0px;width:118.0px;text-align:center;top:456.34px;font-size:12.3px;line-height:16px;font-weight:400;color:#2f2f2f;">Plan &amp; E<u style="text-decoration-thickness:1px;text-underline-offset:1.5px">x</u>ecute</div>
<div class="r" style="left:25px;top:478px;width:118px;height:21px;box-sizing:border-box;border:1px solid #c6c6c6;border-radius:3px;background:linear-gradient(#fbfbfb,#ececec);"></div>
<div class="t" style="left:25.0px;width:118.0px;text-align:center;top:480.44px;font-size:12.3px;line-height:16px;font-weight:400;color:#b4b4b4;"><u style="text-decoration-thickness:1px;text-underline-offset:1.5px">S</u>top</div>
<div class="r" style="left:25px;top:518px;width:118px;height:22px;box-sizing:border-box;border:1px solid #c6c6c6;border-radius:3px;background:linear-gradient(#fbfbfb,#ececec);"></div>
<div class="t" style="left:25.0px;width:118.0px;text-align:center;top:521.54px;font-size:12.3px;line-height:16px;font-weight:400;color:#b4b4b4;">Clear octomap</div>
<div class="t" style="left:157.8px;top:406.94px;font-size:12.3px;line-height:16px;font-weight:400;color:#2f2f2f;">Planning Group:</div>
<div class="r" style="left:158px;top:427px;width:117px;height:21px;box-sizing:border-box;border:1px solid #c6c6c6;border-radius:3px;background:linear-gradient(#fbfbfb,#ececec);"></div>
<div class="t" style="left:162.2px;top:429.74px;font-size:12.3px;line-height:16px;font-weight:400;color:#2f2f2f;">rm_group</div>
<svg class="r" style="left:261px;top:435.5px" width="8" height="4"><path d="M0.5 0.5H7.5L4 4Z" fill="#333"/></svg>
<div class="t" style="left:157.8px;top:452.54px;font-size:12.3px;line-height:16px;font-weight:400;color:#2f2f2f;">Start State:</div>
<div class="r" style="left:158px;top:473px;width:117px;height:21px;box-sizing:border-box;border:1px solid #c6c6c6;border-radius:3px;background:linear-gradient(#fbfbfb,#ececec);"></div>
<div class="t" style="left:162.2px;top:475.24px;font-size:12.3px;line-height:16px;font-weight:400;color:#2f2f2f;">&lt;current&gt;</div>
<svg class="r" style="left:261px;top:481.5px" width="8" height="4"><path d="M0.5 0.5H7.5L4 4Z" fill="#333"/></svg>
<div class="t" style="left:157.8px;top:497.94px;font-size:12.3px;line-height:16px;font-weight:400;color:#2f2f2f;">Goal State:</div>
<div class="r" style="left:158px;top:519px;width:117px;height:21px;box-sizing:border-box;border:1px solid #c6c6c6;border-radius:3px;background:linear-gradient(#fbfbfb,#ececec);"></div>
<div class="t" style="left:162.2px;top:521.34px;font-size:12.3px;line-height:16px;font-weight:400;color:#2f2f2f;">&lt;current&gt;</div>
<svg class="r" style="left:261px;top:527.5px" width="8" height="4"><path d="M0.5 0.5H7.5L4 4Z" fill="#333"/></svg>
<div class="t" style="left:297.5px;top:409.94px;font-size:12.3px;line-height:16px;font-weight:400;color:#2f2f2f;">Planning Time (s):</div>
<div class="r" style="left:421px;top:407px;width:121px;height:20px;box-sizing:border-box;border:1px solid #c2c2c2;border-radius:3px;background:#fff;"></div>
<div class="r" style="left:530px;top:408px;width:1px;height:18px;background:#d6d6d6;"></div>
<svg class="r" style="left:532px;top:410.0px" width="8" height="14"><path d="M1 5.5L4 2.5L7 5.5Z M1 8.5L4 11.5L7 8.5Z" fill="#444"/></svg>
<div class="t" style="left:425.0px;top:409.94px;font-size:12.3px;line-height:16px;font-weight:400;color:#2f2f2f;">5.0</div>
<div class="t" style="left:297.5px;top:432.14px;font-size:12.3px;line-height:16px;font-weight:400;color:#2f2f2f;">Planning Attempts:</div>
<div class="r" style="left:421px;top:430px;width:121px;height:20px;box-sizing:border-box;border:1px solid #c2c2c2;border-radius:3px;background:#fff;"></div>
<div class="r" style="left:530px;top:431px;width:1px;height:18px;background:#d6d6d6;"></div>
<svg class="r" style="left:532px;top:433.0px" width="8" height="14"><path d="M1 5.5L4 2.5L7 5.5Z M1 8.5L4 11.5L7 8.5Z" fill="#444"/></svg>
<div class="t" style="left:425.0px;top:432.14px;font-size:12.3px;line-height:16px;font-weight:400;color:#2f2f2f;">10</div>
<div class="t" style="left:297.5px;top:454.34px;font-size:12.3px;line-height:16px;font-weight:400;color:#2f2f2f;">Velocity Scaling:</div>
<div class="r" style="left:421px;top:452px;width:121px;height:20px;box-sizing:border-box;border:1px solid #c2c2c2;border-radius:3px;background:#fff;"></div>
<div class="r" style="left:530px;top:453px;width:1px;height:18px;background:#d6d6d6;"></div>
<svg class="r" style="left:532px;top:455.0px" width="8" height="14"><path d="M1 5.5L4 2.5L7 5.5Z M1 8.5L4 11.5L7 8.5Z" fill="#444"/></svg>
<div class="t" style="left:425.0px;top:454.34px;font-size:12.3px;line-height:16px;font-weight:400;color:#2f2f2f;">0.10</div>
<div class="t" style="left:297.5px;top:476.14px;font-size:12.3px;line-height:16px;font-weight:400;color:#2f2f2f;">Accel. Scaling:</div>
<div class="r" style="left:421px;top:474px;width:121px;height:20px;box-sizing:border-box;border:1px solid #c2c2c2;border-radius:3px;background:#fff;"></div>
<div class="r" style="left:530px;top:475px;width:1px;height:18px;background:#d6d6d6;"></div>
<svg class="r" style="left:532px;top:477.0px" width="8" height="14"><path d="M1 5.5L4 2.5L7 5.5Z M1 8.5L4 11.5L7 8.5Z" fill="#444"/></svg>
<div class="t" style="left:425.0px;top:476.34px;font-size:12.3px;line-height:16px;font-weight:400;color:#2f2f2f;">0.10</div>
<div class="r" style="left:297.5px;top:517.2px;width:11.0px;height:11.0px;box-sizing:border-box;border:1px solid #c8c8c8;border-radius:2px;background:#fff;"></div>
<div class="t" style="left:312.8px;top:514.94px;font-size:12.3px;line-height:16px;font-weight:400;color:#2f2f2f;">Use Cartesian Path</div>
<div class="r" style="left:297.5px;top:536.9000000000001px;width:11.0px;height:11.0px;box-sizing:border-box;border:1px solid #c8c8c8;border-radius:2px;background:#fff;"></div>
<div class="t" style="left:312.8px;top:534.64px;font-size:12.3px;line-height:16px;font-weight:400;color:#2f2f2f;">Collision-aware IK</div>
<div class="r" style="left:297.5px;top:556.6px;width:11.0px;height:11.0px;box-sizing:border-box;border:1px solid #c8c8c8;border-radius:2px;background:#fff;"></div>
<div class="t" style="left:312.8px;top:554.34px;font-size:12.3px;line-height:16px;font-weight:400;color:#2f2f2f;">Approx IK Solutions</div>
<div class="r" style="left:297.5px;top:576.3000000000001px;width:11.0px;height:11.0px;box-sizing:border-box;border:1px solid #c8c8c8;border-radius:2px;background:#fff;"></div>
<div class="t" style="left:312.8px;top:574.04px;font-size:12.3px;line-height:16px;font-weight:400;color:#2f2f2f;">External Comm.</div>
<div class="r" style="left:297.5px;top:596.0px;width:11.0px;height:11.0px;box-sizing:border-box;border:1px solid #c8c8c8;border-radius:2px;background:#fff;"></div>
<div class="t" style="left:312.8px;top:593.74px;font-size:12.3px;line-height:16px;font-weight:400;color:#2f2f2f;">Replanning</div>
<div class="r" style="left:297.5px;top:615.7px;width:11.0px;height:11.0px;box-sizing:border-box;border:1px solid #c8c8c8;border-radius:2px;background:#fff;"></div>
<div class="t" style="left:312.8px;top:613.44px;font-size:12.3px;line-height:16px;font-weight:400;color:#2f2f2f;">Sensor Positioning</div>
<div class="t" style="left:17.8px;top:586.54px;font-size:12.3px;line-height:16px;font-weight:400;color:#2f2f2f;">Path Constraints</div>
<div class="r" style="left:25px;top:608px;width:250px;height:21px;box-sizing:border-box;border:1px solid #c6c6c6;border-radius:3px;background:linear-gradient(#fbfbfb,#ececec);"></div>
<div class="t" style="left:29.0px;top:610.54px;font-size:12.3px;line-height:16px;font-weight:400;color:#2f2f2f;">None</div>
<svg class="r" style="left:261px;top:616.5px" width="8" height="4"><path d="M0.5 0.5H7.5L4 4Z" fill="#333"/></svg>
<svg class="r" style="left:277px;top:654px" width="14" height="2"><g fill="#c0c0c0"><rect x="0" y="0" width="1" height="1"/><rect x="3" y="0" width="1" height="1"/><rect x="6" y="0" width="1" height="1"/><rect x="9" y="0" width="1" height="1"/><rect x="12" y="0" width="1" height="1"/></g></svg>
<div class="r" style="left:1px;top:657px;width:567px;height:18px;background:#b3b3b3;"></div>
<svg class="r" style="left:4px;top:662px" width="14" height="9"><path d="M0.5 1L4 4.5L0.5 8Z" fill="#333"/><rect x="4" y="1.5" width="9" height="6" rx="2.5" fill="#333"/></svg>
<div class="t" style="left:22.2px;top:658.64px;font-size:12.3px;line-height:16px;font-weight:400;color:#262626;">Views</div>
<div class="r" style="left:553px;top:660px;width:13px;height:13px;box-sizing:border-box;border:1px solid #bdbdbd;border-radius:2px;background:#fbfbfb;"></div>
<svg class="r" style="left:555px;top:661.5px" width="9" height="9"><circle cx="4.5" cy="4.5" r="4.3" fill="#d21a1a"/><path d="M3 3L6 6M6 3L3 6" stroke="#fff" stroke-width="1.2"/></svg>
<div class="t" style="left:3.5px;top:683.14px;font-size:12.3px;line-height:16px;font-weight:400;color:#2f2f2f;">Type:</div>
<div class="r" style="left:38px;top:681px;width:267px;height:20px;box-sizing:border-box;border:1px solid #c6c6c6;border-radius:3px;background:linear-gradient(#fbfbfb,#ececec);"></div>
<div class="t" style="left:42.5px;top:683.14px;font-size:12.3px;line-height:16px;font-weight:400;color:#2f2f2f;">Orbit (rviz_default_plugins)</div>
<svg class="r" style="left:291px;top:689.0px" width="8" height="4"><path d="M0.5 0.5H7.5L4 4Z" fill="#333"/></svg>
<div class="r" style="left:501px;top:680px;width:66px;height:21px;box-sizing:border-box;border:1px solid #c6c6c6;border-radius:3px;background:linear-gradient(#fbfbfb,#ececec);"></div>
<div class="t" style="left:501.0px;width:66.0px;text-align:center;top:683.14px;font-size:12.3px;line-height:16px;font-weight:400;color:#2f2f2f;">Zero</div>
<div class="r" style="left:1px;top:707px;width:568px;height:72px;box-sizing:border-box;border:1px solid #c9c9c9;background:#fff;"></div>
<div class="r" style="left:556px;top:708px;width:12px;height:70px;background:#fdfdfd;border-left:1px solid #e2e2e2;"></div>
<div class="r" style="left:557px;top:744px;width:11px;height:23px;background:#e0e0e0;"></div>
<svg class="r" style="left:558px;top:711px" width="8" height="6"><path d="M0.5 4.5L4 1L7.5 4.5Z" fill="#444"/></svg>
<svg class="r" style="left:558px;top:769px" width="8" height="6"><path d="M0.5 1L4 4.5L7.5 1Z" fill="#444"/></svg>
<svg class="r" style="left:6.5px;top:712.3px" width="7" height="5"><path d="M0 0.5H7L3.5 4Z" fill="#444"/></svg>
<div class="t" style="left:20.9px;top:707.54px;font-size:12.3px;line-height:16px;font-weight:700;color:#111;">Current View</div>
<div class="t" style="left:37.5px;top:721.34px;font-size:12.3px;line-height:16px;font-weight:400;color:#2f2f2f;">Near Clip Distance</div>
<div class="t" style="left:37.5px;top:735.24px;font-size:12.3px;line-height:16px;font-weight:400;color:#2f2f2f;">Invert Z Axis</div>
<div class="t" style="left:37.5px;top:749.24px;font-size:12.3px;line-height:16px;font-weight:400;color:#2f2f2f;">Target Frame</div>
<div class="r" style="left:2px;top:762px;width:554px;height:16px;overflow:hidden">
<div class="t" style="left:35.5px;top:1.34px;font-size:12.3px;line-height:16px;color:#2f2f2f">Distance</div>
<div class="t" style="left:285.5px;top:1.34px;font-size:12.3px;line-height:16px;color:#2f2f2f">2</div>
</div>
<div class="t" style="left:287.7px;top:707.54px;font-size:12.3px;line-height:16px;font-weight:700;color:#111;">Orbit (rviz_default_plugins)</div>
<div class="t" style="left:287.7px;top:721.34px;font-size:12.3px;line-height:16px;font-weight:400;color:#2f2f2f;">0.01</div>
<div class="r" style="left:287.5px;top:737px;width:11.0px;height:11px;box-sizing:border-box;border:1px solid #c8c8c8;border-radius:2px;background:#fff;"></div>
<div class="t" style="left:287.7px;top:749.24px;font-size:12.3px;line-height:16px;font-weight:400;color:#2f2f2f;">base_link</div>
<div class="r" style="left:3px;top:784px;width:184px;height:20px;box-sizing:border-box;border:1px solid #c6c6c6;border-radius:3px;background:linear-gradient(#fbfbfb,#ececec);"></div>
<div class="t" style="left:3.0px;width:184.0px;text-align:center;top:785.34px;font-size:12.3px;line-height:16px;font-weight:400;color:#2f2f2f;">Save</div>
<div class="r" style="left:192px;top:784px;width:185px;height:20px;box-sizing:border-box;border:1px solid #c6c6c6;border-radius:3px;background:linear-gradient(#fbfbfb,#ececec);"></div>
<div class="t" style="left:192.0px;width:185.0px;text-align:center;top:785.34px;font-size:12.3px;line-height:16px;font-weight:400;color:#2f2f2f;">Remove</div>
<div class="r" style="left:383px;top:784px;width:184px;height:20px;box-sizing:border-box;border:1px solid #c6c6c6;border-radius:3px;background:linear-gradient(#fbfbfb,#ececec);"></div>
<div class="t" style="left:383.0px;width:184.0px;text-align:center;top:785.34px;font-size:12.3px;line-height:16px;font-weight:400;color:#2f2f2f;">Rename</div>
<div class="r" style="left:3px;top:808px;width:43px;height:20px;box-sizing:border-box;border:1px solid #c6c6c6;border-bottom:none;border-radius:3px 3px 0 0;background:linear-gradient(#fbfbfb,#ececec);"></div>
<div class="t" style="left:8.8px;top:810.34px;font-size:12.3px;line-height:16px;font-weight:400;color:#2f2f2f;">Reset</div>
<div class="t" style="left:51.6px;top:809.94px;font-size:12.3px;line-height:16px;font-weight:400;color:#2f2f2f;"><b style="color:#111">Left-Click:</b> Rotate. <b style="color:#111">Middle-Click:</b> Move X/Y. <b style="color:#111">Right-Click/Mouse Wheel:</b> Zoom. <b style="color:#111">Shift:</b> More options.</div>
<div class="t" style="left:1111.0px;top:807.34px;font-size:12.3px;line-height:16px;font-weight:400;color:#2f2f2f;">31 fps</div>
<svg class="r" style="left:1152px;top:818px" width="10" height="10"><g fill="#c4c4c4"><rect x="7" y="4" width="1" height="1"/><rect x="4" y="7" width="1" height="1"/><rect x="7" y="7" width="1" height="1"/><rect x="1" y="9" width="1" height="1"/><rect x="4" y="9" width="1" height="1"/><rect x="7" y="9" width="1" height="1"/></g></svg>
<div class="r" style="left:24px;top:453px;width:121px;height:23px;box-sizing:border-box;border:3px solid #ff1a10;"></div>
<div class="t" style="left:97.3px;top:553.35px;font-size:19.2px;line-height:24px;font-weight:400;color:#e8202c;">Motion command</div>
<div class="t" style="left:457.4px;top:245.29px;font-size:18.8px;line-height:24px;font-weight:400;color:#e8202c;">Control ball</div>
<svg class="r" style="left:0;top:0;pointer-events:none" width="1162" height="828">
<path d="M553 256.8 L781.5 243.6 L781.5 240 L798 247 L781.5 255 L781.5 251.2 Z" fill="#ff2a0c"/>
<path d="M130.6 465 L143 476.5 L140.6 477.8 L162.2 556 L160.6 556 L133.8 480.8 L128.4 482.6 Z" fill="#ff2010"/>
</svg>
</body></html>
